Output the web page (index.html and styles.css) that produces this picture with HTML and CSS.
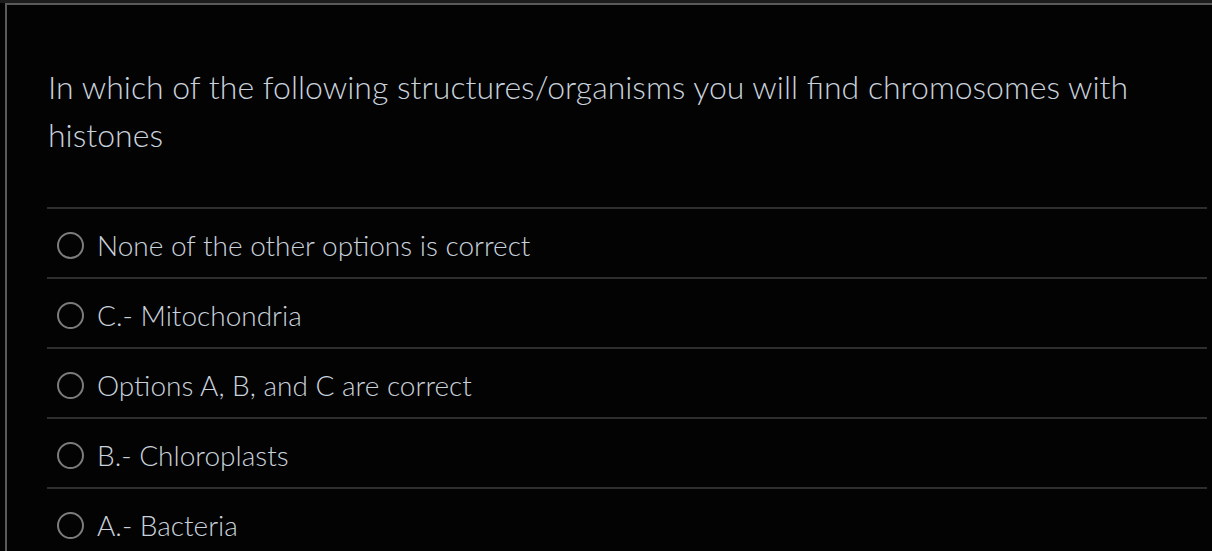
FILE: index.html
```html
<!DOCTYPE html>
<html>
<head>
<meta charset="utf-8">
<link rel="stylesheet" href="styles.css">
</head>
<body>
<div class="frame">
  <div class="topbar"></div>
  <div class="question">In which of the following structures/organisms you will find chromosomes with histones</div>
  <ul class="options">
    <li class="option"><span class="radio"></span><span class="label">None of the other options is correct</span></li>
    <li class="option"><span class="radio"></span><span class="label">C.- Mitochondria</span></li>
    <li class="option"><span class="radio"></span><span class="label">Options A, B, and C are correct</span></li>
    <li class="option"><span class="radio"></span><span class="label">B.- Chloroplasts</span></li>
    <li class="option"><span class="radio"></span><span class="label">A.- Bacteria</span></li>
  </ul>
</div>
</body>
</html>
```
FILE: styles.css
```css
html, body {
  margin: 0;
  padding: 0;
  background: #030303;
  height: 100%;
  overflow: hidden;
}
body {
  font-family: Lato, "Open Sans", sans-serif;
  color: #c9d2dc;
  border-top: 3px solid #1c1c1c;
}
.frame {
  margin-left: 5px;
  margin-top: -3px;
  border-left: 2px solid #5a5a5a;
  min-height: 100%;
}
.topbar {
  height: 3px;
  background: #1c1c1c;
  border-bottom: 2px solid #5a5a5a;
}
.question {
  padding: 58px 60px 0 41px;
  font-size: 32px;
  line-height: 48px;
  font-weight: 300;
}
.options {
  list-style: none;
  margin: 48px 5px 0 40px;
  padding: 0;
}
.option {
  display: flex;
  align-items: center;
  height: 68px;
  border-top: 2px solid #2e2e2e;
  padding-left: 10px;
}
.radio {
  width: 23px;
  height: 23px;
  border: 2.5px solid #7c7c7c;
  border-radius: 50%;
  margin-top: 4px;
  flex: none;
}
.label {
  margin-left: 13px;
  font-size: 28px;
  font-weight: 300;
  margin-top: 3px;
}
```
